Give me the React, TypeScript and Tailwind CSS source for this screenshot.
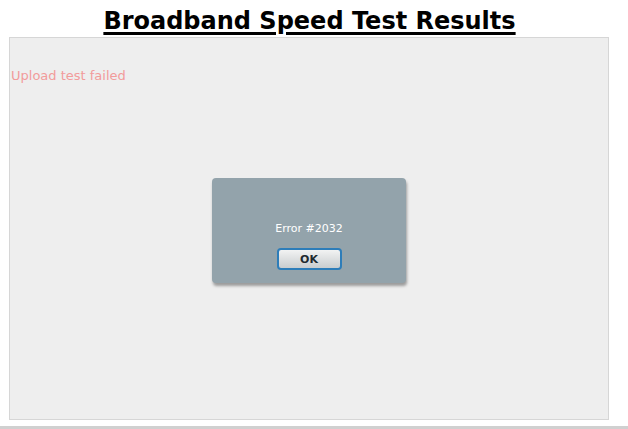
export default function App() {
  return (
    <div className="w-[628px] h-[429px] bg-white relative overflow-hidden" style={{ fontFamily: '"DejaVu Sans", Verdana, sans-serif' }}>
      <h1 className="text-center text-[24px] leading-[29px] pt-[7px] pr-[9px] font-bold underline decoration-[3px] underline-offset-[3px] text-black">
        Broadband Speed Test Results
      </h1>
      <div className="ml-[9px] mt-[1px] w-[600px] h-[383px] border border-[#d6d6d6] bg-[#eeeeee] flex flex-col">
        <p className="mt-[30px] ml-[1px] text-[13px] leading-[15px] text-[#f29b9b]">Upload test failed</p>
        <div className="flex justify-center mt-[95px]">
          <div className="w-[194px] h-[105px] rounded-[4px] bg-[#93a3ab] shadow-[1px_3px_3px_rgba(0,0,0,0.35)] flex flex-col items-center">
            <p className="mt-[44px] text-[11px] leading-[13px] text-white">Error #2032</p>
            <button className="mt-[13px] w-[65px] h-[22px] rounded-[4px] border-2 border-[#2d7db9] bg-gradient-to-b from-[#f2f3f3] to-[#c9cdcf] text-[11px] font-bold text-[#1e2a30] leading-none">
              OK
            </button>
          </div>
        </div>
      </div>
      <div className="absolute left-0 right-0 top-[426px] h-[3px] bg-[#d0d0d0]" />
    </div>
  );
}
